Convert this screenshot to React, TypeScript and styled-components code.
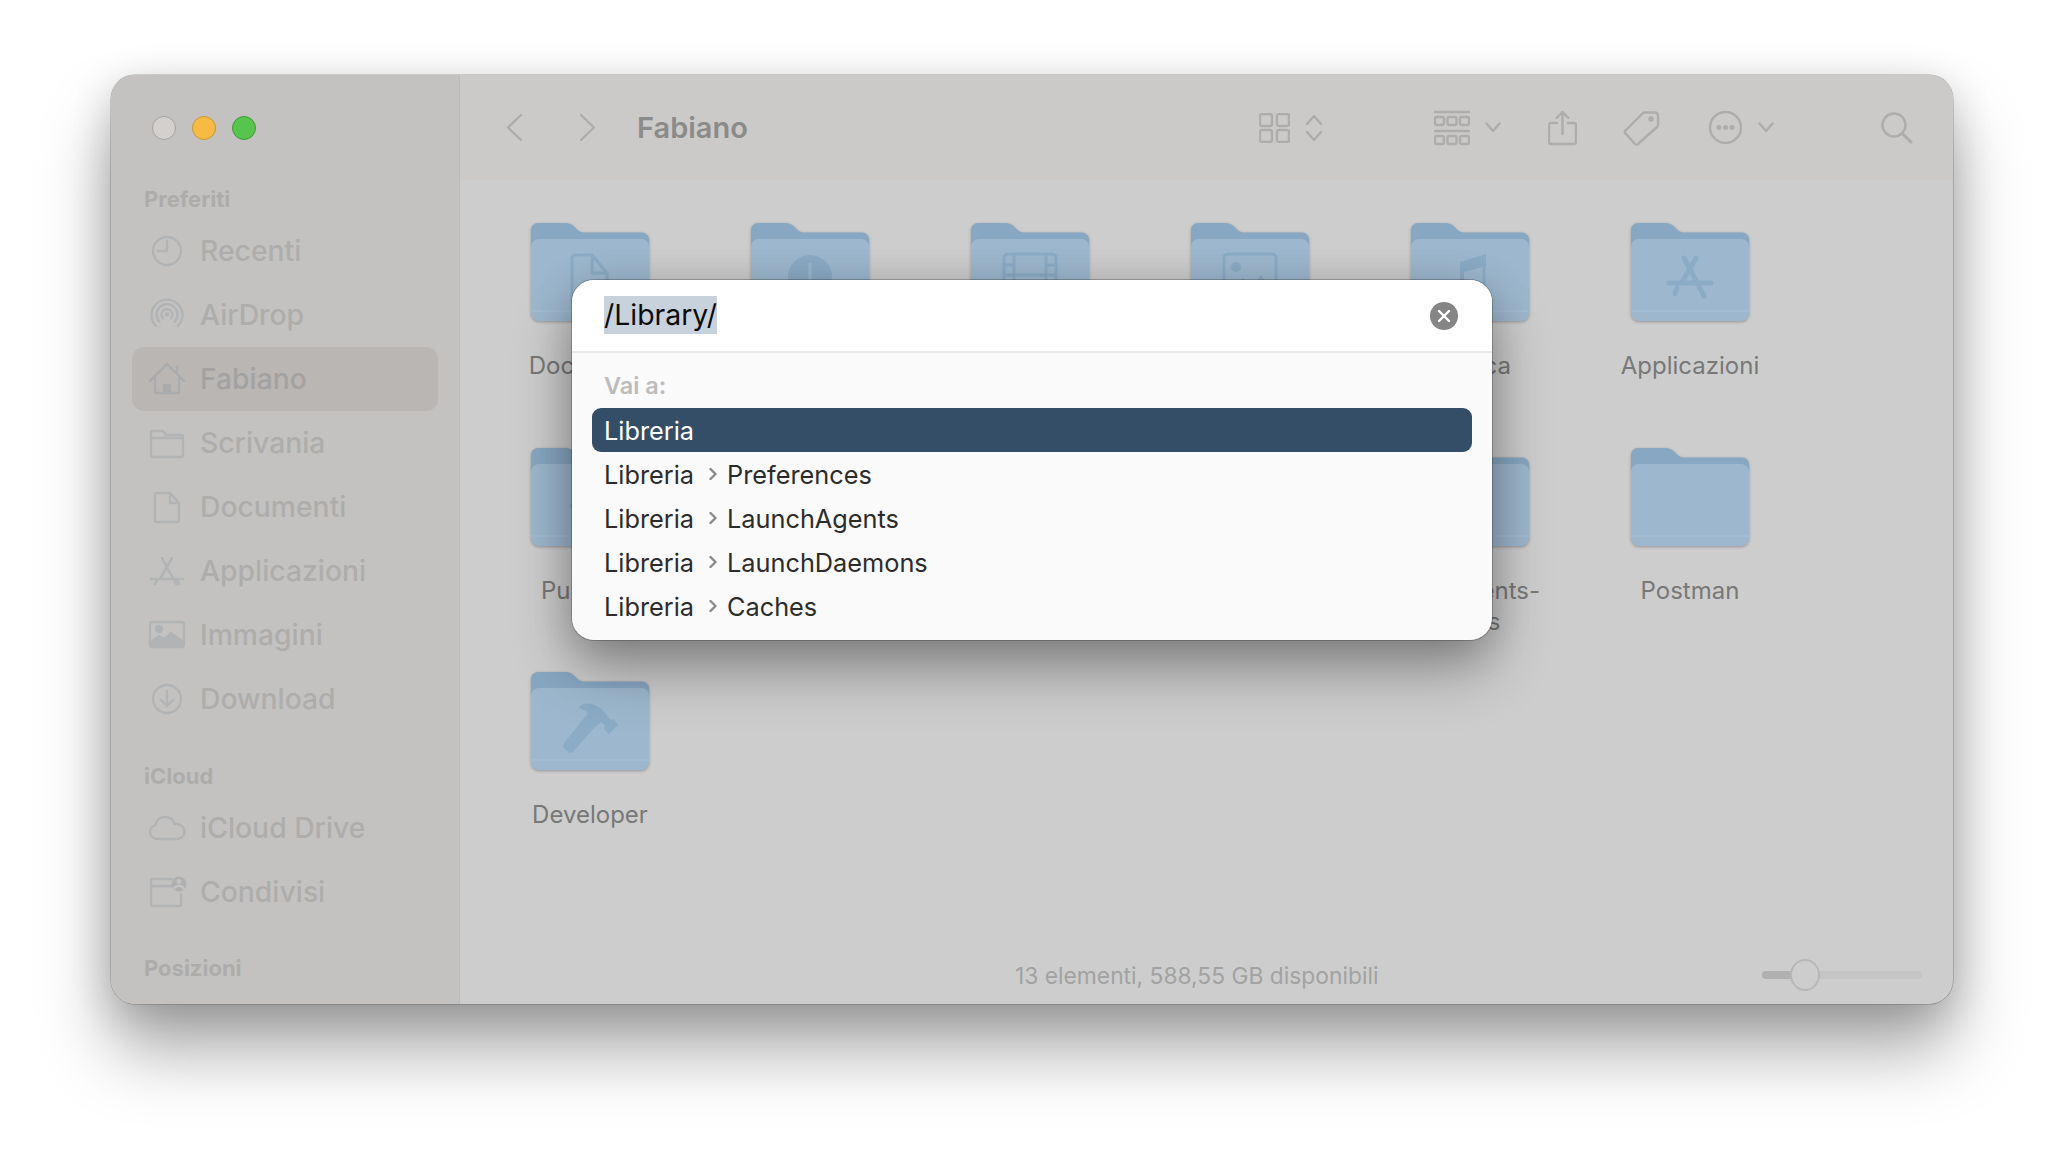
import React from 'react'
import styled, { createGlobalStyle } from 'styled-components'

const GlobalStyle = createGlobalStyle`
  html, body {
    margin: 0;
    padding: 0;
    background: #fff;
    font-family: Inter, "Liberation Sans", sans-serif;
  }
`

const Page = styled.div`
  width: 2064px;
  height: 1152px;
  box-sizing: border-box;
  padding: 75px 111px 148px;
  background: #fff;
  overflow: hidden;
`

const Window = styled.div`
  position: relative;
  display: flex;
  width: 100%;
  height: 100%;
  box-sizing: border-box;
  border-radius: 24px;
  background: #cdcdcd;
  box-shadow: 0 0 0 0.5px rgba(0, 0, 0, 0.3), 0 46px 70px rgba(0, 0, 0, 0.34), 0 8px 40px rgba(0, 0, 0, 0.16);
`

const Sidebar = styled.aside`
  width: 349px;
  flex-shrink: 0;
  box-sizing: border-box;
  padding-top: 41px;
  background: #c3c2c0;
  border-right: 1px solid #bcbbb9;
  border-radius: 24px 0 0 24px;
  overflow: hidden;
`

const Lights = styled.div`
  display: flex;
  gap: 16px;
  padding-left: 41px;
  margin-bottom: 41px;
`

const Light = styled.span<{ $color: string; $edge: string }>`
  width: 24px;
  height: 24px;
  box-sizing: border-box;
  border-radius: 50%;
  background: ${(p) => p.$color};
  border: 1px solid ${(p) => p.$edge};
`

const SectionLabel = styled.div<{ $top?: number }>`
  height: 36px;
  line-height: 36px;
  margin-top: ${(p) => p.$top ?? 0}px;
  margin-bottom: 2px;
  padding-left: 33px;
  font-size: 22px;
  font-weight: 700;
  color: #adacab;
`

const NavRow = styled.div<{ $active?: boolean }>`
  display: flex;
  align-items: center;
  height: 64px;
  margin: 0 21px;
  padding-left: 15px;
  border-radius: 12px;
  background: ${(p) => (p.$active ? '#bab6b4' : 'transparent')};
  font-size: 28.3px;
  font-weight: 500;
  color: ${(p) => (p.$active ? '#a3a2a2' : '#aeadac')};
`

const NavIcon = styled.svg`
  width: 40px;
  height: 40px;
  margin-right: 13px;
  flex-shrink: 0;
  fill: none;
  stroke: #b1b3b5;
  stroke-width: 2.3;
  stroke-linecap: round;
  stroke-linejoin: round;
`

const Main = styled.main`
  flex: 1;
  display: flex;
  flex-direction: column;
  min-width: 0;
`

const Toolbar = styled.header`
  display: flex;
  align-items: center;
  height: 105px;
  flex-shrink: 0;
  box-sizing: border-box;
  padding: 0 40px 0 46px;
  background: #cbcac8;
  border-radius: 0 24px 0 0;
`

const Title = styled.h1`
  margin: 0 auto 0 41px;
  font-size: 29px;
  font-weight: 600;
  color: #8b8b8a;
`

const ToolIcon = styled.svg<{ $w: number; $h: number; $gap?: number }>`
  width: ${(p) => p.$w}px;
  height: ${(p) => p.$h}px;
  margin-left: ${(p) => p.$gap ?? 0}px;
  flex-shrink: 0;
  fill: none;
  stroke: #adadab;
  stroke-width: 2.4;
  stroke-linecap: round;
  stroke-linejoin: round;
`

const Grid = styled.section`
  flex: 1;
  display: grid;
  grid-template-columns: repeat(6, 220px);
  grid-auto-rows: 224.5px;
  padding: 42px 0 0 20px;
`

const Item = styled.div`
  display: flex;
  flex-direction: column;
  align-items: center;
`

const FolderSvg = styled.svg`
  width: 120px;
  height: 100px;
  margin-bottom: 28px;
  filter: drop-shadow(0 1px 1.5px rgba(80, 80, 80, 0.45));
`

const ItemLabel = styled.div`
  width: 200px;
  text-align: center;
  white-space: pre-line;
  font-size: 24px;
  line-height: 31px;
  color: #787878;
`

const StatusBar = styled.footer`
  display: flex;
  align-items: center;
  height: 58px;
  flex-shrink: 0;
  padding: 0 31px 0 555px;
`

const StatusText = styled.span`
  font-size: 22.8px;
  color: #a2a2a2;
`

const Slider = styled.div`
  position: relative;
  width: 160px;
  height: 8px;
  margin-left: auto;
  border-radius: 4px;
  background: #c5c5c5;
`

const SliderFill = styled.div`
  width: 30px;
  height: 100%;
  border-radius: 4px 0 0 4px;
  background: #b0b0b0;
`

const SliderKnob = styled.div`
  position: absolute;
  left: 28px;
  top: -12px;
  width: 30px;
  height: 32px;
  box-sizing: border-box;
  border-radius: 50%;
  background: #cdcdcd;
  border: 2px solid #b7b7b7;
`

const DialogShadow = styled.div`
  position: absolute;
  left: 461px;
  top: 205px;
  width: 920px;
  height: 360px;
  border-radius: 22px;
  box-shadow: 0 0 0 1px rgba(0, 0, 0, 0.22), 0 30px 60px rgba(0, 0, 0, 0.3), 0 8px 40px rgba(0, 0, 0, 0.18);
`

const Dialog = styled.div`
  position: absolute;
  left: 461px;
  top: 205px;
  width: 920px;
  height: 360px;
  border-radius: 22px;
  overflow: hidden;
  background: #fafafa;
`

const InputRow = styled.div`
  display: flex;
  align-items: center;
  height: 73px;
  box-sizing: border-box;
  padding: 0 34px 0 32px;
  background: #fff;
  border-bottom: 2px solid #e8e8e8;
`

const Selected = styled.span`
  height: 38px;
  line-height: 38px;
  margin-top: -1px;
  background: #c8d2dc;
  font-size: 28.4px;
  color: #0c0c0c;
`

const ClearButton = styled.button`
  display: flex;
  align-items: center;
  justify-content: center;
  width: 28px;
  height: 28px;
  margin: 0 0 0 auto;
  padding: 0;
  border: none;
  border-radius: 50%;
  background: #858585;
`

const GoLabel = styled.div`
  height: 55px;
  box-sizing: border-box;
  padding: 21px 0 0 32px;
  font-size: 23.5px;
  line-height: 24px;
  font-weight: 600;
  color: #bcbcbc;
`

const PathRow = styled.div<{ $selected?: boolean }>`
  display: flex;
  align-items: center;
  height: 44px;
  margin: 0 20px;
  padding-left: 12px;
  border-radius: 9px;
  font-size: 25.3px;
  color: ${(p) => (p.$selected ? '#fff' : '#2c2c2c')};
  background: ${(p) => (p.$selected ? '#344e67' : 'transparent')};
`

const PathChevron = styled.svg`
  width: 8px;
  height: 14px;
  margin: 0 10px 0 15px;
  fill: none;
  stroke: #8a8a8a;
  stroke-width: 2.4;
  stroke-linecap: round;
  stroke-linejoin: round;
`

type FolderProps = { name?: string; glyph?: React.ReactNode }

const Folder = ({ name, glyph }: FolderProps) => (
  <Item>
    <FolderSvg viewBox="0 0 120 100">
      <path
        d="M1 8a7 7 0 0 1 7-7h26c6 0 8 1.5 11 4.5 3 3 5 5 10 5h57a7 7 0 0 1 7 7V40H1z"
        fill="#88a7c2"
      />
      <rect x="1" y="17" width="118" height="82" rx="8" fill="#9db8ce" />
      <path d="M1 89h118" stroke="#a6bed3" strokeWidth="1.4" />
      {glyph}
    </FolderSvg>
    {name && <ItemLabel>{name}</ItemLabel>}
  </Item>
)

const glyphStroke = { fill: 'none', stroke: '#8cabc5', strokeWidth: 3, strokeLinejoin: 'round', strokeLinecap: 'round' } as const
const glyphFill = { fill: '#8cabc5' }

const DocGlyph = (
  <g {...glyphStroke}>
    <path d="M45 33h17l15 18v27a3 3 0 0 1-3 3H45a3 3 0 0 1-3-3V36a3 3 0 0 1 3-3z" />
    <path d="M62 33v18h15" />
  </g>
)

const DownloadGlyph = (
  <g>
    <circle cx="60" cy="55" r="22" {...glyphFill} />
    <path d="M60 42v26M51 59l9 9 9-9" fill="none" stroke="#9db8ce" strokeWidth="3" strokeLinecap="round" />
  </g>
)

const FilmGlyph = (
  <g {...glyphStroke}>
    <rect x="34" y="32" width="52" height="42" rx="4" />
    <path d="M44 32v42M76 32v42M44 53h32M34 43h10M34 53h10M34 64h10M76 43h10M76 53h10M76 64h10" />
  </g>
)

const ImageGlyph = (
  <g>
    <rect x="34" y="32" width="52" height="42" rx="4" {...glyphStroke} />
    <circle cx="46" cy="45" r="5" {...glyphFill} />
    <path d="M38 71l15-15 9 9 9-12 12 18z" {...glyphFill} />
  </g>
)

const MusicGlyph = (
  <g>
    <path d="M50 40l26-8v12l-22 6v24h-4z" {...glyphFill} />
    <path d="M74 36v32M52 42v32" {...glyphStroke} />
  </g>
)

const AppsGlyph = (
  <g {...glyphStroke} strokeWidth={5}>
    <path d="M54 36l20 38M66 36L52 60M39 61h42M47 66l-2 6" />
  </g>
)

const PublicGlyph = (
  <g>
    <path d="M60 40l19 19-19 19-19-19z" {...glyphStroke} />
    <circle cx="60" cy="59" r="4" {...glyphFill} />
  </g>
)

const HammerGlyph = (
  <g>
    <path d="M55 46l10 10-22 25q-3 2-6-1l-3-3q-2-3 0-5z" {...glyphFill} />
    <path d="M49 37q3-6 13-4 10 3 16 13l3 3 3-1 4 6-9 9-5-5 1-4-4-3-6 5-10-10 3-3q-2-4-9-6z" {...glyphFill} />
  </g>
)

const folders: FolderProps[] = [
  { name: 'Documenti', glyph: DocGlyph },
  { glyph: DownloadGlyph },
  { glyph: FilmGlyph },
  { glyph: ImageGlyph },
  { name: 'Musica', glyph: MusicGlyph },
  { name: 'Applicazioni', glyph: AppsGlyph },
  { name: 'Pubblica', glyph: PublicGlyph },
  {},
  {},
  {},
  { name: 'Documents-\nTools' },
  { name: 'Postman' },
  { name: 'Developer', glyph: HammerGlyph }
]

const paths = ['Preferences', 'LaunchAgents', 'LaunchDaemons', 'Caches']

const App = () => (
  <Page>
    <GlobalStyle />
    <Window>
      <Sidebar>
        <Lights>
          <Light $color="#d3d0ce" $edge="#a5a3a1" />
          <Light $color="#f6bb45" $edge="#c9962f" />
          <Light $color="#57c44e" $edge="#3f9b39" />
        </Lights>
        <SectionLabel>Preferiti</SectionLabel>
        <NavRow>
          <NavIcon viewBox="0 0 40 40">
            <circle cx="20" cy="20" r="14" />
            <path d="M20 10v10h-9" />
          </NavIcon>
          Recenti
        </NavRow>
        <NavRow>
          <NavIcon viewBox="0 0 40 40">
            <path d="M9 31a15.5 15.5 0 1 1 22 0" />
            <path d="M12.5 27a10.5 10.5 0 1 1 15 0" />
            <path d="M16 23.500a5.500 5.500 0 1 1 8 0" />
            <circle cx="20" cy="19.500" r="1.200" />
          </NavIcon>
          AirDrop
        </NavRow>
        <NavRow $active>
          <NavIcon viewBox="0 0 40 40">
            <path d="M3 22L20 5l17 17M30 14V8" stroke="#a9abad" />
            <path d="M8 18v16h24V18" stroke="#a9abad" />
            <rect x="16" y="25" width="8" height="9" fill="#a9abad" stroke="none" />
          </NavIcon>
          Fabiano
        </NavRow>
        <NavRow>
          <NavIcon viewBox="0 0 40 40">
            <path d="M4 10a2 2 0 0 1 2-2h10l3 4h15a2 2 0 0 1 2 2v18a2 2 0 0 1-2 2H6a2 2 0 0 1-2-2z" />
            <path d="M4 15h32" />
          </NavIcon>
          Scrivania
        </NavRow>
        <NavRow>
          <NavIcon viewBox="0 0 40 40">
            <path d="M10 6h13l9 10v17a2 2 0 0 1-2 2H10a2 2 0 0 1-2-2V8a2 2 0 0 1 2-2z" />
            <path d="M23 6v10h9" />
          </NavIcon>
          Documenti
        </NavRow>
        <NavRow>
          <NavIcon viewBox="0 0 40 40">
            <path d="M15 7l14 26M25 7L13 28M4 28h32M8 33l2-4M32 33l-2-4" strokeWidth="2.600" />
          </NavIcon>
          Applicazioni
        </NavRow>
        <NavRow>
          <NavIcon viewBox="0 0 40 40">
            <rect x="3" y="7" width="34" height="25" rx="2" />
            <circle cx="12" cy="14" r="3" fill="#b1b3b5" />
            <path d="M4 31v-4l8-6 5 3 7-6 12 9v4z" fill="#b1b3b5" />
          </NavIcon>
          Immagini
        </NavRow>
        <NavRow>
          <NavIcon viewBox="0 0 40 40">
            <circle cx="20" cy="20" r="14" />
            <path d="M20 12v15M14 21l6 6 6-6" />
          </NavIcon>
          Download
        </NavRow>
        <SectionLabel $top={27}>iCloud</SectionLabel>
        <NavRow>
          <NavIcon viewBox="0 0 40 40">
            <path d="M10 31a7 7 0 0 1-1.500-13.800C9.500 11 15 8 20 9c4 .8 6.500 3.500 7.500 7 5-.5 10 2.500 10 7.500 0 4.500-3.500 7.500-7.500 7.500z" />
          </NavIcon>
          iCloud Drive
        </NavRow>
        <NavRow>
          <NavIcon viewBox="0 0 40 40">
            <path d="M24 14H6a2 2 0 0 0-2 2v16a2 2 0 0 0 2 2h26a2 2 0 0 0 2-2V22" />
            <path d="M4 16V9a2 2 0 0 1 2-2h19M4 14h20" />
            <circle cx="32" cy="12" r="7.500" fill="#adafb1" stroke="none" />
            <circle cx="32" cy="9.500" r="2.500" fill="#c3c2c0" stroke="none" />
            <path d="M27.500 16.500c1-3.500 8-3.500 9 0" stroke="#c3c2c0" />
          </NavIcon>
          Condivisi
        </NavRow>
        <SectionLabel $top={26}>Posizioni</SectionLabel>
      </Sidebar>

      <Main>
        <Toolbar>
          <ToolIcon $w={17} $h={29} viewBox="0 0 17 29">
            <path d="M15 2L2 14.500 15 27" />
          </ToolIcon>
          <ToolIcon $w={17} $h={29} $gap={56} viewBox="0 0 17 29">
            <path d="M2 2l13 12.500L2 27" />
          </ToolIcon>
          <Title>Fabiano</Title>
          <ToolIcon $w={31} $h={30} viewBox="0 0 31 30">
            <rect x="1" y="1" width="12" height="12" rx="2" />
            <rect x="18" y="1" width="12" height="12" rx="2" />
            <rect x="1" y="17" width="12" height="12" rx="2" />
            <rect x="18" y="17" width="12" height="12" rx="2" />
          </ToolIcon>
          <ToolIcon $w={18} $h={28} $gap={15} viewBox="0 0 18 28">
            <path d="M2 10l7-8 7 8M2 18l7 8 7-8" />
          </ToolIcon>
          <ToolIcon $w={36} $h={36} $gap={111} viewBox="0 0 36 36">
            <path d="M1 2h34M1 21h34" />
            <rect x="1" y="7" width="9" height="8" rx="1.500" />
            <rect x="13.500" y="7" width="9" height="8" rx="1.500" />
            <rect x="26" y="7" width="9" height="8" rx="1.500" />
            <rect x="1" y="26" width="9" height="8" rx="1.500" />
            <rect x="13.500" y="26" width="9" height="8" rx="1.500" />
            <rect x="26" y="26" width="9" height="8" rx="1.500" />
          </ToolIcon>
          <ToolIcon $w={16} $h={11} $gap={15} viewBox="0 0 16 11">
            <path d="M1.500 1.500L8 9l6.500-7.500" />
          </ToolIcon>
          <ToolIcon $w={29} $h={36} $gap={47} viewBox="0 0 29 36">
            <path d="M9 13H3a2 2 0 0 0-2 2v17a2 2 0 0 0 2 2h23a2 2 0 0 0 2-2V15a2 2 0 0 0-2-2h-6" />
            <path d="M14.500 24V2M8.500 8l6-6 6 6" />
          </ToolIcon>
          <ToolIcon $w={37} $h={36} $gap={46} viewBox="0 0 37 36">
            <path d="M22 2.500h10a3 3 0 0 1 3 3V15a3 3 0 0 1-1 2L15 34a2 2 0 0 1-3 0L2.500 23.500a2 2 0 0 1 0-3L20 3a3 3 0 0 1 2-.5z" />
            <circle cx="28" cy="9" r="1.500" fill="#adadab" />
          </ToolIcon>
          <ToolIcon $w={33} $h={33} $gap={49} viewBox="0 0 33 33">
            <circle cx="16.500" cy="16.500" r="15.500" />
            <circle cx="10" cy="16.500" r="1.300" fill="#adadab" />
            <circle cx="16.500" cy="16.500" r="1.300" fill="#adadab" />
            <circle cx="23" cy="16.500" r="1.300" fill="#adadab" />
          </ToolIcon>
          <ToolIcon $w={16} $h={11} $gap={16} viewBox="0 0 16 11">
            <path d="M1.500 1.500L8 9l6.500-7.500" />
          </ToolIcon>
          <ToolIcon $w={32} $h={32} $gap={107} viewBox="0 0 32 32">
            <circle cx="13" cy="13" r="11.500" />
            <path d="M21.500 21.500L30 30" strokeWidth="3" />
          </ToolIcon>
        </Toolbar>

        <Grid>
          {folders.map((f, i) => (
            <Folder key={i} name={f.name} glyph={f.glyph} />
          ))}
        </Grid>

        <StatusBar>
          <StatusText>13 elementi, 588,55 GB disponibili</StatusText>
          <Slider>
            <SliderFill />
            <SliderKnob />
          </Slider>
        </StatusBar>
      </Main>

      <DialogShadow />
      <Dialog>
        <InputRow>
          <Selected>/Library/</Selected>
          <ClearButton aria-label="Cancella">
            <svg width="14" height="14" viewBox="0 0 14 14">
              <path d="M2 2l10 10M12 2L2 12" stroke="#fff" strokeWidth="2.400" strokeLinecap="round" />
            </svg>
          </ClearButton>
        </InputRow>
        <GoLabel>Vai a:</GoLabel>
        <PathRow $selected>Libreria</PathRow>
        {paths.map((p) => (
          <PathRow key={p}>
            Libreria
            <PathChevron viewBox="0 0 8 14">
              <path d="M1.500 2l5 5-5 5" />
            </PathChevron>
            {p}
          </PathRow>
        ))}
      </Dialog>
    </Window>
  </Page>
)

export default App
